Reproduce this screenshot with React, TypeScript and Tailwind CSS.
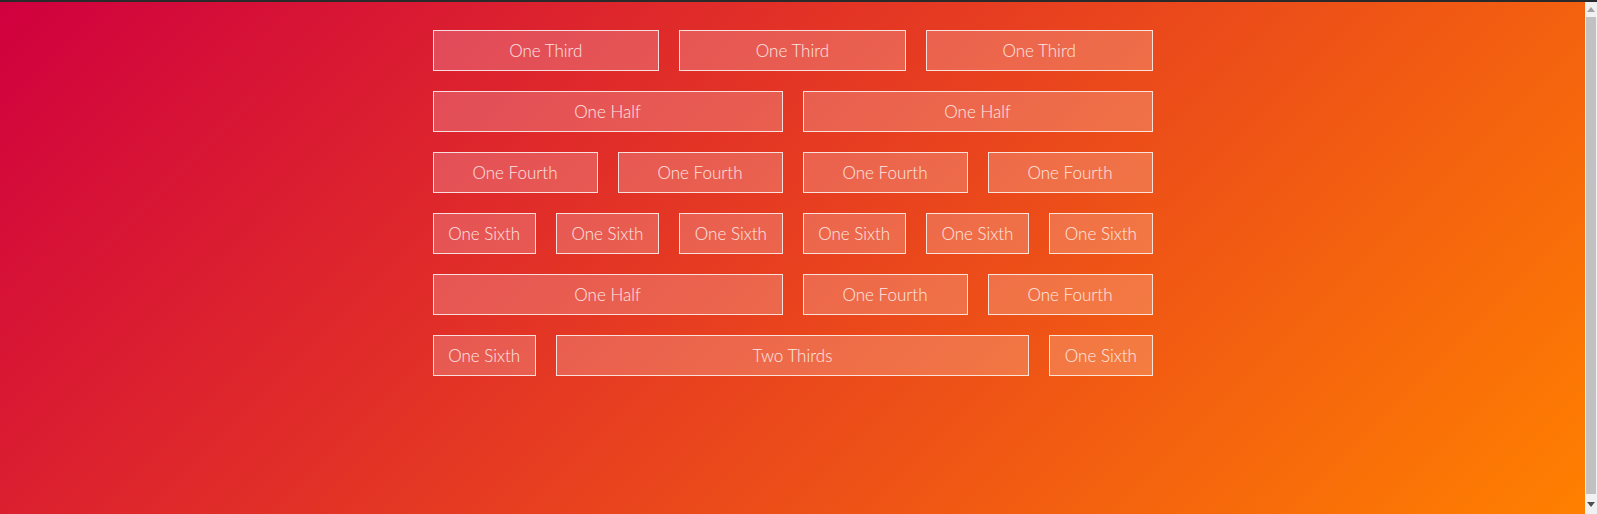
import React from "react";

type Cell = { label: string; span: string };

const rows: Cell[][] = [
  [
    { label: "One Third", span: "col-span-4" },
    { label: "One Third", span: "col-span-4" },
    { label: "One Third", span: "col-span-4" },
  ],
  [
    { label: "One Half", span: "col-span-6" },
    { label: "One Half", span: "col-span-6" },
  ],
  [
    { label: "One Fourth", span: "col-span-3" },
    { label: "One Fourth", span: "col-span-3" },
    { label: "One Fourth", span: "col-span-3" },
    { label: "One Fourth", span: "col-span-3" },
  ],
  [
    { label: "One Sixth", span: "col-span-2" },
    { label: "One Sixth", span: "col-span-2" },
    { label: "One Sixth", span: "col-span-2" },
    { label: "One Sixth", span: "col-span-2" },
    { label: "One Sixth", span: "col-span-2" },
    { label: "One Sixth", span: "col-span-2" },
  ],
  [
    { label: "One Half", span: "col-span-6" },
    { label: "One Fourth", span: "col-span-3" },
    { label: "One Fourth", span: "col-span-3" },
  ],
  [
    { label: "One Sixth", span: "col-span-2" },
    { label: "Two Thirds", span: "col-span-8" },
    { label: "One Sixth", span: "col-span-2" },
  ],
];

function Scrollbar() {
  return (
    <div className="w-[12px] shrink-0 bg-[#f1f1f1] flex flex-col">
      <div className="h-[15px] flex items-center justify-center">
        <svg width="8" height="5" viewBox="0 0 8 5">
          <polygon points="4,0 8,5 0,5" fill="#a3a3a3" />
        </svg>
      </div>
      <div className="flex-1 mx-[1px] bg-[#c1c1c1]" />
      <div className="h-[20px] flex items-center justify-center">
        <svg width="8" height="5" viewBox="0 0 8 5">
          <polygon points="0,0 8,0 4,5" fill="#505050" />
        </svg>
      </div>
    </div>
  );
}

export default function App() {
  return (
    <div className="h-screen flex flex-col overflow-hidden">
      <div className="h-[2px] shrink-0 bg-[#2a2a2a]" />
      <div className="flex-1 flex min-h-0">
        <div className="flex-1 bg-[linear-gradient(135deg,#d0003f,#ff8000)] font-['Lato','Liberation_Sans',sans-serif]">
          <div className="mx-auto w-[720px] pt-[28px] grid grid-cols-12 gap-5">
            {rows.flat().map((c, i) => (
              <div
                key={i}
                className={`${c.span} h-[41px] flex items-center justify-center border border-white/80 bg-white/20 text-white/85 text-[17px] font-light`}
              >
                {c.label}
              </div>
            ))}
          </div>
        </div>
        <Scrollbar />
      </div>
    </div>
  );
}
